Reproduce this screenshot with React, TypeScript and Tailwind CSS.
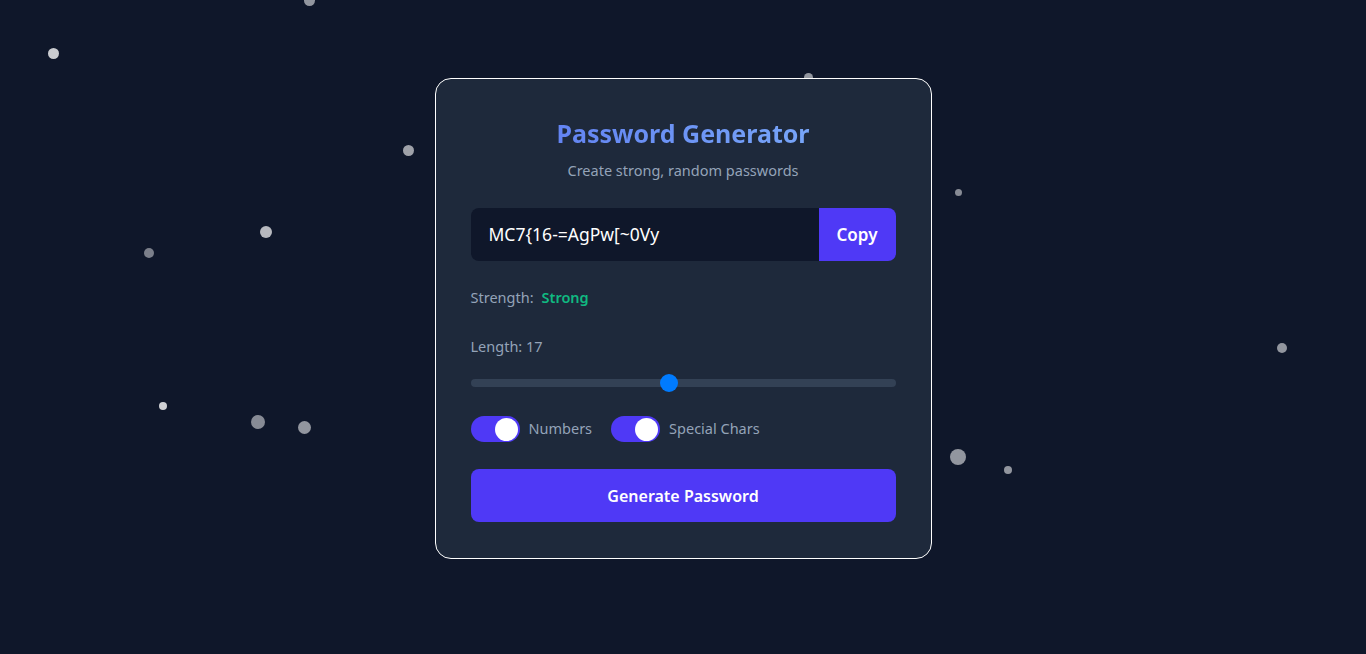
import React, { useState } from 'react';

const dots = [
  { x: 53, y: 53, d: 11, o: 0.78 },
  { x: 309, y: 0, d: 11, o: 0.55 },
  { x: 408, y: 150, d: 11, o: 0.6 },
  { x: 149, y: 253, d: 10, o: 0.45 },
  { x: 266, y: 232, d: 12, o: 0.7 },
  { x: 163, y: 406, d: 8, o: 0.8 },
  { x: 258, y: 422, d: 14, o: 0.5 },
  { x: 304, y: 427, d: 13, o: 0.55 },
  { x: 808, y: 77, d: 9, o: 0.55 },
  { x: 958, y: 192, d: 7, o: 0.5 },
  { x: 1282, y: 348, d: 10, o: 0.55 },
  { x: 958, y: 457, d: 16, o: 0.55 },
  { x: 1008, y: 470, d: 8, o: 0.55 },
];

const Toggle: React.FC<{ label: string; on: boolean; onToggle: () => void }> = ({ label, on, onToggle }) => (
  <button onClick={onToggle} className="flex items-center gap-[9px]">
    <span
      className={`flex h-[26px] w-[49px] items-center rounded-full px-[2px] ${on ? 'justify-end bg-[#4f39f6]' : 'justify-start bg-[#334155]'}`}
    >
      <span className="h-[23px] w-[23px] rounded-full bg-white" />
    </span>
    <span className="text-[14.5px] text-[#94a3b8]">{label}</span>
  </button>
);

export default function App() {
  const [numbers, setNumbers] = useState(true);
  const [special, setSpecial] = useState(true);
  const length = 17;

  return (
    <div
      className="relative flex h-[654px] w-full justify-center overflow-hidden bg-[#0f172a] pt-[78px]"
      style={{ fontFamily: '"Noto Sans", "Open Sans", sans-serif' }}
    >
      {dots.map((p, i) => (
        <span
          key={i}
          className="absolute rounded-full bg-white"
          style={{ left: p.x - p.d / 2, top: p.y - p.d / 2, width: p.d, height: p.d, opacity: p.o }}
        />
      ))}

      <div className="relative z-10 h-fit w-[497px] rounded-2xl border border-white bg-[#1e293b] px-[35px] pt-[34px] pb-[36px]">
        <h1 className="bg-gradient-to-r from-[#5d78f0] to-[#7fb0fa] bg-clip-text text-center text-[25px] leading-[40px] font-bold text-transparent">
          Password Generator
        </h1>
        <p className="mt-[7px] text-center text-[14.5px] text-[#94a3b8]">Create strong, random passwords</p>

        <div className="mt-[26px] flex h-[53px] overflow-hidden rounded-lg">
          <div className="flex flex-1 items-center bg-[#0f172a] pl-[18px] text-[17.5px] text-white">MC7{'{'}16-=AgPw[~0Vy</div>
          <button className="w-[77px] bg-[#4f39f6] text-[17px] font-semibold text-white">Copy</button>
        </div>

        <div className="mt-[26px] flex items-center gap-[8px] text-[14.5px]">
          <span className="text-[#94a3b8]">Strength:</span>
          <span className="font-semibold text-[#10b981]">Strong</span>
        </div>

        <div className="mt-[27px] text-[14.5px] text-[#94a3b8]">Length: {length}</div>

        <div className="relative mt-[22px] h-[8px] rounded-full bg-[#334155]">
          <span className="absolute top-1/2 left-[189px] h-[18px] w-[18px] -translate-y-1/2 rounded-full bg-[#007bff]" />
        </div>

        <div className="mt-[29px] flex items-center gap-[19px]">
          <Toggle label="Numbers" on={numbers} onToggle={() => setNumbers(!numbers)} />
          <Toggle label="Special Chars" on={special} onToggle={() => setSpecial(!special)} />
        </div>

        <button className="mt-[27px] h-[53px] w-full rounded-lg bg-[#4f39f6] text-[16px] font-semibold text-white">
          Generate Password
        </button>
      </div>
    </div>
  );
}
